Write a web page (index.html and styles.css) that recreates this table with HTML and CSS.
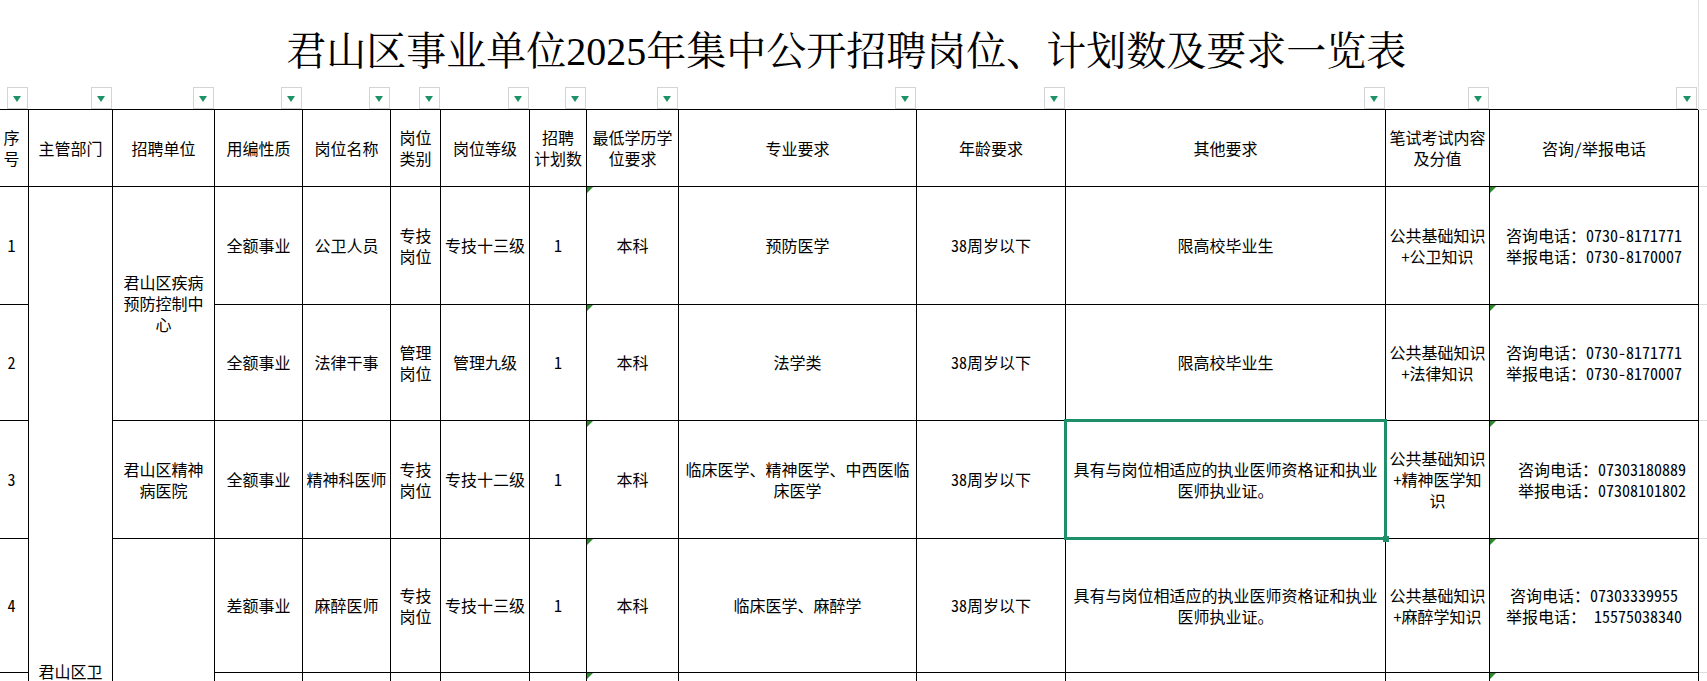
FILE: index.html
```html
<!DOCTYPE html>
<html lang="zh-CN">
<head>
<meta charset="utf-8">
<title>君山区事业单位2025年集中公开招聘岗位、计划数及要求一览表</title>
<link rel="stylesheet" href="styles.css">
</head>
<body>
<table class="sheet">
  <colgroup>
    <col class="c1"><col class="c2"><col class="c3"><col class="c4"><col class="c5"><col class="c6"><col class="c7">
    <col class="c8"><col class="c9"><col class="c10"><col class="c11"><col class="c12"><col class="c13"><col class="c14"><col class="cg">
  </colgroup>
  <tbody>
    <tr class="r-title">
      <td class="title" colspan="14">君山区事业单位2025年集中公开招聘岗位、计划数及要求一览表</td>
      <td class="gut-top"></td>
    </tr>
    <tr class="r-flt">
      <td class="flt"><span class="fbtn"></span></td>
      <td class="flt"><span class="fbtn"></span></td>
      <td class="flt"><span class="fbtn"></span></td>
      <td class="flt"><span class="fbtn"></span></td>
      <td class="flt"><span class="fbtn"></span></td>
      <td class="flt"><span class="fbtn"></span></td>
      <td class="flt"><span class="fbtn"></span></td>
      <td class="flt"><span class="fbtn"></span></td>
      <td class="flt"><span class="fbtn"></span></td>
      <td class="flt"><span class="fbtn"></span></td>
      <td class="flt"><span class="fbtn"></span></td>
      <td class="flt"><span class="fbtn"></span></td>
      <td class="flt"><span class="fbtn"></span></td>
      <td class="flt"><span class="fbtn"></span></td>
      <td class="gut-top"></td>
    </tr>
    <tr class="r-head grid">
      <td>序<br>号</td>
      <td>主管部门</td>
      <td>招聘单位</td>
      <td>用编性质</td>
      <td>岗位名称</td>
      <td>岗位<br>类别</td>
      <td>岗位等级</td>
      <td>招聘<br>计划数</td>
      <td>最低学历学<br>位要求</td>
      <td>专业要求</td>
      <td>年龄要求</td>
      <td>其他要求</td>
      <td>笔试考试内容<br>及分值</td>
      <td>咨询/举报电话</td>
      <td class="gut"></td>
    </tr>
    <tr class="r1 grid">
      <td>1</td>
      <td class="dept" rowspan="5">君山区卫<br>生健康局</td>
      <td rowspan="2">君山区疾病<br>预防控制中<br>心</td>
      <td>全额事业</td>
      <td>公卫人员</td>
      <td>专技<br>岗位</td>
      <td>专技十三级</td>
      <td>1</td>
      <td class="err">本科</td>
      <td>预防医学</td>
      <td>38周岁以下</td>
      <td>限高校毕业生</td>
      <td>公共基础知识<br>+公卫知识</td>
      <td class="err">咨询电话：0730-8171771<br>举报电话：0730-8170007</td>
      <td class="gut"></td>
    </tr>
    <tr class="r2 grid">
      <td>2</td>
      <td>全额事业</td>
      <td>法律干事</td>
      <td>管理<br>岗位</td>
      <td>管理九级</td>
      <td>1</td>
      <td class="err">本科</td>
      <td>法学类</td>
      <td>38周岁以下</td>
      <td>限高校毕业生</td>
      <td>公共基础知识<br>+法律知识</td>
      <td class="err">咨询电话：0730-8171771<br>举报电话：0730-8170007</td>
      <td class="gut"></td>
    </tr>
    <tr class="r3 grid">
      <td>3</td>
      <td>君山区精神<br>病医院</td>
      <td>全额事业</td>
      <td>精神科医师</td>
      <td>专技<br>岗位</td>
      <td>专技十二级</td>
      <td>1</td>
      <td class="err">本科</td>
      <td>临床医学、精神医学、中西医临<br>床医学</td>
      <td>38周岁以下</td>
      <td class="sel">具有与岗位相适应的执业医师资格证和执业<br>医师执业证。</td>
      <td>公共基础知识<br>+精神医学知<br>识</td>
      <td class="err shift">咨询电话：07303180889<br>举报电话：07308101802</td>
      <td class="gut"></td>
    </tr>
    <tr class="r4 grid">
      <td>4</td>
      <td rowspan="2"></td>
      <td>差额事业</td>
      <td>麻醉医师</td>
      <td>专技<br>岗位</td>
      <td>专技十三级</td>
      <td>1</td>
      <td class="err">本科</td>
      <td>临床医学、麻醉学</td>
      <td>38周岁以下</td>
      <td>具有与岗位相适应的执业医师资格证和执业<br>医师执业证。</td>
      <td>公共基础知识<br>+麻醉学知识</td>
      <td class="err">咨询电话：07303339955<br>举报电话： 15575038340</td>
      <td class="gut"></td>
    </tr>
    <tr class="r5 grid">
      <td></td>
      <td></td>
      <td></td>
      <td></td>
      <td></td>
      <td></td>
      <td class="err"></td>
      <td></td>
      <td></td>
      <td></td>
      <td></td>
      <td class="err"></td>
      <td class="gut"></td>
    </tr>
  </tbody>
</table>
</body>
</html>
```
FILE: styles.css
```css
html, body {
  margin: 0;
  padding: 0;
  background: #ffffff;
}

body {
  width: 1707px;
  height: 681px;
  overflow: hidden;
}

.sheet {
  border-collapse: collapse;
  table-layout: fixed;
  width: 1724px;
  margin-left: -6px;
  font-family: "Noto Sans Mono CJK SC", "Noto Sans CJK SC", sans-serif;
  font-size: 16px;
  font-weight: 300;
  color: #000;
}

.c1 { width: 34px; }
.c2 { width: 84px; }
.c3 { width: 102px; }
.c4 { width: 88px; }
.c5 { width: 88px; }
.c6 { width: 50px; }
.c7 { width: 89px; }
.c8 { width: 57px; }
.c9 { width: 92px; }
.c10 { width: 238px; }
.c11 { width: 149px; }
.c12 { width: 320px; }
.c13 { width: 104px; }
.c14 { width: 209px; }
.cg { width: 20px; }

.sheet td {
  padding: 0 2px;
  text-align: center;
  vertical-align: middle;
  white-space: nowrap;
  line-height: 21px;
}

.r-title { height: 87px; }
.r-flt { height: 22px; }
.r-head { height: 77px; }
.r1 { height: 118px; }
.r2 { height: 116px; }
.r3 { height: 118px; }
.r4 { height: 134px; }
.r5 { height: 120px; }

.sheet td.title {
  font-family: "Liberation Serif", "Noto Serif CJK SC", "Noto Sans CJK SC", serif;
  font-size: 40px;
  font-weight: 400;
  line-height: 48px;
  vertical-align: top;
  padding: 28px 0 0 0;
  border-right: 1px solid #e2e2e2;
}

.sheet td.gut-top {
  padding: 0;
}

.sheet td.flt {
  padding: 0 1px 0 0;
  text-align: right;
  vertical-align: bottom;
  line-height: 0;
}

.sheet tr.r-flt td:nth-child(14) {
  border-right: 1px solid #e2e2e2;
}

.fbtn {
  display: inline-flex;
  align-items: center;
  justify-content: center;
  width: 19px;
  height: 20px;
  border: 1px solid #d4d4d4;
  background: #fff;
  vertical-align: bottom;
}

.fbtn::after {
  content: "";
  width: 0;
  height: 0;
  margin-top: 1px;
  border-left: 4.5px solid transparent;
  border-right: 4.5px solid transparent;
  border-top: 6px solid #1f9166;
}

.grid td {
  border: 1px solid #000;
}

.grid td.gut {
  border-top: 1px solid #dcdcdc;
  border-bottom: 1px solid #dcdcdc;
  border-right: none;
  padding: 0;
}

.sheet td.dept {
  vertical-align: top;
  padding-top: 474px;
}

.sheet td.shift {
  padding-left: 18px;
}

.err {
  position: relative;
}

.err::before {
  content: "";
  position: absolute;
  left: 0;
  top: 0;
  width: 0;
  height: 0;
  border-top: 6px solid #2c8a2c;
  border-right: 6px solid transparent;
}

.sel {
  position: relative;
}

.sel::after {
  content: "";
  position: absolute;
  left: -2px;
  top: -2px;
  right: -2px;
  bottom: -2px;
  border: 3px solid #1f8f6a;
  pointer-events: none;
}

.sel::before {
  content: "";
  position: absolute;
  right: -4px;
  bottom: -4px;
  width: 6px;
  height: 6px;
  background: #1f8f6a;
  z-index: 1;
}
```
